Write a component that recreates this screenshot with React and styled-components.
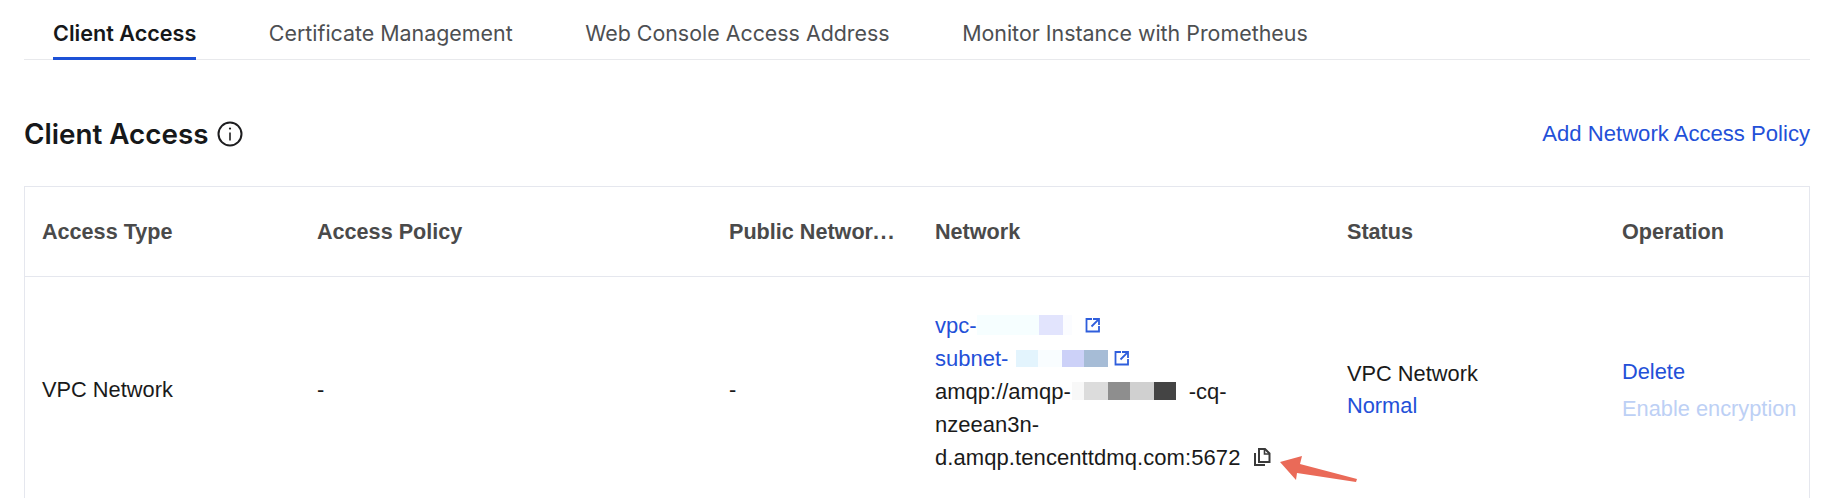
import React from 'react';
import styled, { createGlobalStyle } from 'styled-components';

const GlobalStyle = createGlobalStyle`
    html, body{
        margin:0;
        padding:0;
        height:100%;
        background-color:#fff;
        overflow:hidden;
    }
    body{
        font-family:"Liberation Sans", Arial, sans-serif;
        color:#1a1a1a;
    }
`;

const Page = styled.div`
    position:relative;
    width:1842px;
    height:498px;
    overflow:hidden;
    box-sizing:border-box;
    padding:0 32px 0 24px;
`;

const TabBar = styled.div`
    height:59px;
    padding-left:29px;
    display:flex;
    gap:72.5px;
    border-bottom:1px solid #e8e9ec;
`;

const Tab = styled.div`
    height:60px;
    box-sizing:border-box;
    padding-top:21px;
    font-family:Inter, "Liberation Sans", sans-serif;
    font-size:${(p)=>p.$active ? '21.6px' : '21.4px'};
    line-height:24px;
    font-weight:${(p)=>p.$active ? 600 : 400};
    color:${(p)=>p.$active ? '#16181a' : '#4d4f52'};
    border-bottom:${(p)=>p.$active ? '3px solid #1d51d6' : '0'};
`;

const TitleRow = styled.div`
    height:126px;
    display:flex;
    align-items:center;
    justify-content:space-between;
    padding-top:21px;
    box-sizing:border-box;
`;

const TitleWrap = styled.div`
    display:flex;
    align-items:center;
    gap:9px;
`;

const Title = styled.h2`
    margin:0;
    font-family:Inter, "Liberation Sans", sans-serif;
    font-size:27.8px;
    font-weight:600;
    color:#16181a;
`;

const TopLink = styled.a`
    font-size:22.1px;
    color:#2350d8;
`;

const Table = styled.div`
    border:1px solid #e5e7ee;
    border-bottom:0;
`;

const Row = styled.div`
    display:grid;
    grid-template-columns:275px 412px 206px 412px 275px 1fr;
    align-items:center;
    min-height:${(p)=>p.$head ? '89px' : '228px'};
    border-bottom:${(p)=>p.$head ? '1px solid #e5e7ee' : '0'};
`;

const HeadCell = styled.div`
    padding:0 17px;
    font-size:21.6px;
    font-weight:700;
    color:#4a4a4a;
    white-space:nowrap;
`;

const Dots = styled.span`
    letter-spacing:1.5px;
`;

const Cell = styled.div`
    padding:0 17px ${(p)=>p.$lift ? '3px' : '0'};
    font-size:${(p)=>p.$lift ? '21.8px' : '22px'};
    line-height:${(p)=>p.$lift ? '32px' : '33px'};
    color:#1a1a1a;
`;

const Line = styled.div`
    white-space:nowrap;
    display:flex;
    align-items:center;
    letter-spacing:${(p)=>p.$wide ? '.08px' : 'normal'};
    color:${(p)=>p.$color || 'inherit'};
`;

const Mosaic = styled.span`
    display:inline-flex;
    height:${(p)=>p.$h}px;
    margin:0 ${(p)=>p.$right || 0}px 0 ${(p)=>p.$left || 0}px;
`;

const Block = styled.span`
    display:block;
    width:${(p)=>p.$w}px;
    height:100%;
    background-color:${(p)=>p.$c};
`;

const OpLink = styled.div`
    line-height:37px;
    white-space:nowrap;
    color:${(p)=>p.$disabled ? '#bdd0f5' : '#2350d8'};
`;

const ExternalIcon = ({left})=>(
    <svg width="16" height="16" viewBox="0 0 16 16" fill="none" stroke="#2f5edc" strokeWidth="1.8" style={{marginLeft:left}}>
        <path d="M7 2H1.5v12.5H14V9"/>
        <path d="M8 2h6v6M13.6 2.4 6.5 9.5"/>
    </svg>
);

const InfoIcon = ()=>(
    <svg width="26" height="26" viewBox="0 0 26 26" fill="none" stroke="#1d1d1f" strokeWidth="2">
        <circle cx="13" cy="13" r="11.5"/>
        <path d="M13 11.5v8" strokeWidth="1.6"/>
        <circle cx="13" cy="7.6" r="1.1" fill="#1d1d1f" stroke="none"/>
    </svg>
);

const CopyIcon = ()=>(
    <svg width="18" height="20" viewBox="0 0 18 20" fill="none" stroke="#3a3a3a" strokeWidth="2" style={{marginLeft:13}}>
        <path d="M6 2h6l4.5 4.5V15H6z"/>
        <path d="M11.5 2v5h5" strokeWidth="1.6"/>
        <path d="M2 6v12h10"/>
    </svg>
);

const ArrowMark = styled.svg`
    position:absolute;
    left:1276px;
    top:452px;
`;

const App = ()=>{
    return(
        <Page>
            <GlobalStyle/>
            <TabBar>
                <Tab $active>Client Access</Tab>
                <Tab>Certificate Management</Tab>
                <Tab>Web Console Access Address</Tab>
                <Tab>Monitor Instance with Prometheus</Tab>
            </TabBar>
            <TitleRow>
                <TitleWrap>
                    <Title>Client Access</Title>
                    <InfoIcon/>
                </TitleWrap>
                <TopLink>Add Network Access Policy</TopLink>
            </TitleRow>
            <Table>
                <Row $head>
                    <HeadCell>Access Type</HeadCell>
                    <HeadCell>Access Policy</HeadCell>
                    <HeadCell>Public Networ<Dots>...</Dots></HeadCell>
                    <HeadCell>Network</HeadCell>
                    <HeadCell>Status</HeadCell>
                    <HeadCell>Operation</HeadCell>
                </Row>
                <Row>
                    <Cell $lift>VPC Network</Cell>
                    <Cell $lift>-</Cell>
                    <Cell $lift>-</Cell>
                    <Cell>
                        <Line $color="#2350d8">
                            vpc-
                            <Mosaic $h={20}>
                                <Block $w={62} $c="#f6feff"/>
                                <Block $w={24} $c="#e2e4fd"/>
                                <Block $w={9} $c="#fbfcff"/>
                            </Mosaic>
                            <ExternalIcon left={13}/>
                        </Line>
                        <Line $color="#2350d8">
                            subnet-
                            <Mosaic $h={17} $left={8}>
                                <Block $w={22} $c="#e3f4fd"/>
                                <Block $w={24} $c="#f9fdff"/>
                                <Block $w={22} $c="#ccd1f8"/>
                                <Block $w={24} $c="#a6bcd6"/>
                            </Mosaic>
                            <ExternalIcon left={6}/>
                        </Line>
                        <Line>
                            amqp://amqp-
                            <Mosaic $h={18} $left={1} $right={13}>
                                <Block $w={12} $c="#f8f8f8"/>
                                <Block $w={24} $c="#dcdcdc"/>
                                <Block $w={22} $c="#8e8e8e"/>
                                <Block $w={24} $c="#d0d0d0"/>
                                <Block $w={22} $c="#444"/>
                            </Mosaic>
                            -cq-
                        </Line>
                        <Line>nzeean3n-</Line>
                        <Line $wide>d.amqp.tencenttdmq.com:5672<CopyIcon/></Line>
                    </Cell>
                    <Cell $lift>
                        <Line>VPC Network</Line>
                        <Line $color="#2350d8">Normal</Line>
                    </Cell>
                    <Cell $lift>
                        <OpLink>Delete</OpLink>
                        <OpLink $disabled>Enable encryption</OpLink>
                    </Cell>
                </Row>
            </Table>
            <ArrowMark width="84" height="32" viewBox="0 0 84 32">
                <path d="M4 10 26 4 24 12 81 27 80 30 21 21 20 28z" fill="#ea6a58"/>
            </ArrowMark>
        </Page>
    )
}

export default App;
